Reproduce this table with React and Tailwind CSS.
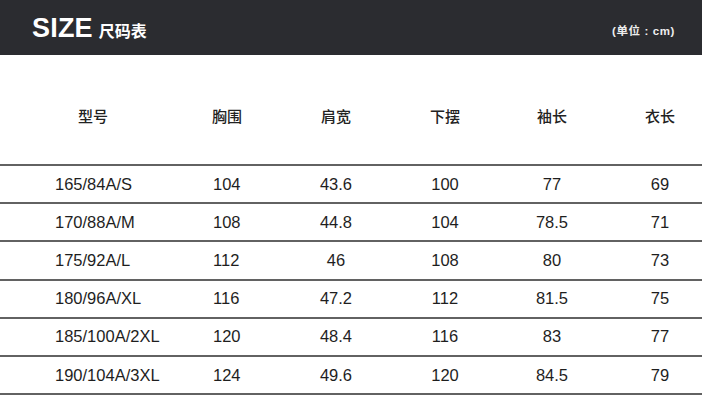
import React from "react";

const rows = [
  ["165/84A/S", "104", "43.6", "100", "77", "69"],
  ["170/88A/M", "108", "44.8", "104", "78.5", "71"],
  ["175/92A/L", "112", "46", "108", "80", "73"],
  ["180/96A/XL", "116", "47.2", "112", "81.5", "75"],
  ["185/100A/2XL", "120", "48.4", "116", "83", "77"],
  ["190/104A/3XL", "124", "49.6", "120", "84.5", "79"],
];

const heads = ["型号", "胸围", "肩宽", "下摆", "袖长", "衣长"];

const grid = "grid grid-cols-[186px_82px_136px_82px_132px_84px]";

export default function App() {
  return (
    <div className="w-[702px] h-[414px] bg-white overflow-hidden font-['Liberation_Sans','Noto_Sans_CJK_SC',sans-serif]">
      <div className="h-[55px] bg-[#2b2c30] flex items-center justify-between pl-[32px] pr-[27px]">
        <div className="flex items-baseline gap-[6px] pt-[1px]">
          <span className="text-[27px] leading-none font-bold text-white tracking-[0.2px]">SIZE</span>
          <span className="text-[16px] leading-none font-bold text-white font-['Noto_Sans_CJK_SC',sans-serif]">尺码表</span>
        </div>
        <span className="text-[11.5px] font-bold text-[#eeeeee] pt-[9px] tracking-[0.6px] font-['Liberation_Sans','Noto_Sans_CJK_SC',sans-serif]">(单位 : cm)</span>
      </div>
      <div className={`${grid} h-[109px] pt-[50px]`}>
        {heads.map((h) => (
          <div key={h} className="text-center text-[15px] leading-[22px] font-medium text-[#222] font-['Noto_Sans_CJK_SC',sans-serif]">
            {h}
          </div>
        ))}
      </div>
      {rows.map((r, i) => (
        <div
          key={i}
          className={`${grid} h-[38.2px] border-t-2 border-[#626262] items-center text-[16.5px] text-[#1e1e1e] ${i === rows.length - 1 ? "border-b-2 h-[40.2px]" : ""}`}
        >
          <div className="pl-[55px]">{r[0]}</div>
          <div className="pl-[27px]">{r[1]}</div>
          <div className="text-center">{r[2]}</div>
          <div className="text-center">{r[3]}</div>
          <div className="text-center">{r[4]}</div>
          <div className="text-center">{r[5]}</div>
        </div>
      ))}
    </div>
  );
}
